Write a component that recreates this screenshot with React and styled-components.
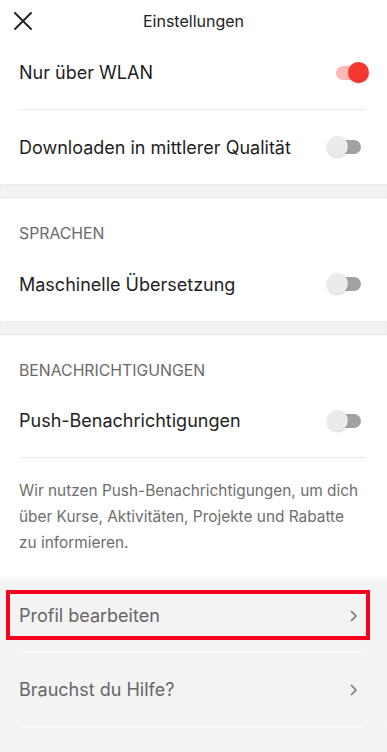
import React from "react";
import styled, { createGlobalStyle } from "styled-components";

const Global = createGlobalStyle`
  html, body { margin: 0; padding: 0; background: #ffffff; }
  body { font-family: Inter, "Noto Sans", "Liberation Sans", sans-serif; -webkit-font-smoothing: antialiased; }
  * { box-sizing: border-box; }
`;

const Page = styled.div`
  width: 387px;
  min-height: 752px;
  display: flex;
  flex-direction: column;
  background: #f3f3f3;
  overflow: hidden;
`;

const Header = styled.header`
  height: 36px;
  padding-top: 6px;
  display: grid;
  grid-template-columns: 60px 1fr 60px;
  align-items: center;
  background: #fff;
`;

const CloseButton = styled.button`
  border: 0;
  background: none;
  padding: 0 0 0 13px;
  height: 30px;
  display: flex;
  align-items: center;
  cursor: pointer;
`;

const Title = styled.h1`
  margin: 0;
  text-align: center;
  font-size: 16px;
  font-weight: 400;
  color: #222;
  line-height: 30px;
`;

const Section = styled.section`
  background: #fff;
  display: flex;
  flex-direction: column;
`;

const Separator = styled.div`
  height: 14px;
  background: #f3f3f3;
  border-bottom: 1px solid #e4e4e4;
  box-shadow: inset 0 2px 3px rgba(0, 0, 0, 0.03);
`;

const Caption = styled.div`
  padding: 27px 19px 5px;
  font-size: 15.8px;
  line-height: 17px;
  color: #6a6a6a;
`;

const Row = styled.div`
  position: relative;
  margin: 0 21px 0 19px;
  height: ${(p) => p.h || 74}px;
  display: flex;
  align-items: center;
  justify-content: space-between;
  border-bottom: ${(p) => (p.divider ? `1px solid ${p.muted ? "#fbfbfb" : "#ececec"}` : "none")};
`;

const Label = styled.span`
  font-size: 18px;
  color: ${(p) => (p.muted ? "#666" : "#1e1e1e")};
`;

const Toggle = styled.span`
  position: relative;
  width: 42px;
  height: 24px;
  margin-right: -3px;
  flex: none;
`;

const Track = styled.span`
  position: absolute;
  left: 9px;
  right: 8px;
  top: 5px;
  height: 14px;
  border-radius: 7px;
  background: ${(p) => (p.on ? "#fbb9b5" : "#a2a2a2")};
`;

const Knob = styled.span`
  position: absolute;
  top: 1px;
  left: ${(p) => (p.on ? 21 : 0)}px;
  width: 21px;
  height: 21px;
  border-radius: 50%;
  background: ${(p) => (p.on ? "#f4372f" : "#ebebeb")};
  box-shadow: 0 1px 2px rgba(0, 0, 0, 0.18);
`;

const Description = styled.p`
  margin: 0;
  padding: 20px 24px 20px 19px;
  font-size: 15.4px;
  line-height: 26px;
  color: #6e6e6e;
`;

const BottomSection = styled.section`
  background: #f3f3f3;
  padding-top: 3px;
  display: flex;
  flex-direction: column;
  box-shadow: inset 0 4px 4px -2px rgba(255, 255, 255, 0.9);
`;

const Highlight = styled.span`
  position: absolute;
  left: -13px;
  right: -4px;
  top: 11px;
  height: 50px;
  border: 4px solid #f7001c;
  pointer-events: none;
`;

const SwitchItem = ({ label, on, divider }) => (
  <Row divider={divider}>
    <Label>{label}</Label>
    <Toggle>
      <Track on={on} />
      <Knob on={on} />
    </Toggle>
  </Row>
);

const Chevron = () => (
  <svg width="8" height="12" viewBox="0 0 8 12" style={{ marginRight: 8 }}>
    <path d="M1.5 1.5 L6 6 L1.5 10.5" fill="none" stroke="#7a7a7a" strokeWidth="1.7" strokeLinecap="round" strokeLinejoin="round" />
  </svg>
);

export default function App() {
  return (
    <>
      <Global />
      <Page>
        <Header>
          <CloseButton aria-label="Schließen">
            <svg width="20" height="18" viewBox="0 0 20 18">
              <path d="M2 1 L18 17 M18 1 L2 17" stroke="#222" strokeWidth="1.9" strokeLinecap="round" />
            </svg>
          </CloseButton>
          <Title>Einstellungen</Title>
          <span />
        </Header>
        <Section>
          <SwitchItem label="Nur über WLAN" on divider />
          <SwitchItem label="Downloaden in mittlerer Qualität" />
        </Section>
        <Separator />
        <Section>
          <Caption>SPRACHEN</Caption>
          <SwitchItem label="Maschinelle Übersetzung" />
        </Section>
        <Separator />
        <Section>
          <Caption>BENACHRICHTIGUNGEN</Caption>
          <SwitchItem label="Push-Benachrichtigungen" divider />
          <Description>
            Wir nutzen Push-Benachrichtigungen, um dich über Kurse, Aktivitäten, Projekte und Rabatte zu informieren.
          </Description>
        </Section>
        <BottomSection>
          <Row divider muted>
            <Label muted>Profil bearbeiten</Label>
            <Chevron />
            <Highlight />
          </Row>
          <Row divider muted>
            <Label muted>Brauchst du Hilfe?</Label>
            <Chevron />
          </Row>
        </BottomSection>
      </Page>
    </>
  );
}
